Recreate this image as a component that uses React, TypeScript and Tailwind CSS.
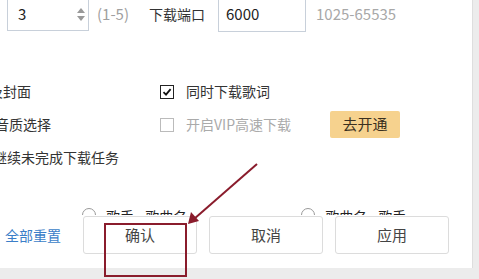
const font = { fontFamily: '"Noto Sans CJK SC", "Noto Sans", sans-serif' };

const CheckBox = ({ checked }: { checked?: boolean }) => (
  <span
    className={`flex h-[14px] w-[14px] items-center justify-center border ${
      checked ? "border-[#222] border-[1.5px]" : "border-[#bbb]"
    }`}
  >
    {checked && (
      <svg width="10" height="10" viewBox="0 0 10 10">
        <path d="M1.5 5.2 L4 7.6 L8.6 2.2" fill="none" stroke="#111" strokeWidth="1.8" />
      </svg>
    )}
  </span>
);

const Btn = ({ label }: { label: string }) => (
  <button className="flex h-[38px] w-[114px] items-center justify-center rounded-[3px] border border-[#dcdcdc] bg-white text-[15px] text-[#444]">
    {label}
  </button>
);

export default function App() {
  return (
    <div className="relative h-[279px] w-[479px] overflow-hidden bg-[#ececec]" style={font}>
      <div className="flex h-[268px] w-[473px] flex-col overflow-hidden border-r border-[#dedede] bg-white">
        {/* top row */}
        <div className="mt-[-3px] flex items-center">
          <div className="ml-[7px] flex h-[32px] w-[82px] items-center justify-between border border-[#c8d0da] pl-[10px] pr-[3px]">
            <span className="text-[15px] text-[#222]">3</span>
            <span className="flex flex-col items-center gap-[3px]">
              <svg width="8" height="5" viewBox="0 0 8 5">
                <path d="M0 5 L4 0 L8 5 Z" fill="#999" />
              </svg>
              <svg width="8" height="5" viewBox="0 0 8 5">
                <path d="M0 0 L4 5 L8 0 Z" fill="#999" />
              </svg>
            </span>
          </div>
          <span className="ml-[8px] text-[15px] text-[#a0a0a0]">(1-5)</span>
          <span className="ml-[20px] text-[14px] text-[#333]">下载端口</span>
          <div className="ml-[13px] flex h-[35px] w-[88px] items-center border border-[#c8d0da] pl-[7px] text-[15px] text-[#222]">
            6000
          </div>
          <span className="ml-[10px] text-[15px] text-[#a8a8a8]">1025-65535</span>
        </div>

        {/* option rows */}
        <div className="mt-[43px] flex h-[33px] items-center">
          <span className="ml-[-11px] w-[171px] text-[14px] text-[#333]">及封面</span>
          <CheckBox checked />
          <span className="ml-[12px] text-[14px] text-[#333]">同时下载歌词</span>
        </div>
        <div className="flex h-[33px] items-center">
          <span className="ml-[-5px] w-[165px] text-[14px] text-[#333]">音质选择</span>
          <CheckBox />
          <span className="ml-[12px] text-[14px] text-[#aaa]">开启VIP高速下载</span>
          <span className="ml-[39px] flex h-[27px] w-[70px] items-center justify-center rounded-[2px] bg-[#f6d28e] text-[15px] text-[#3a3020]">
            去开通
          </span>
        </div>
        <div className="flex h-[32px] items-center">
          <span className="ml-[-7px] text-[14px] text-[#333]">继续未完成下载任务</span>
        </div>

        {/* radio row, mostly hidden behind footer */}
        <div className="mt-[34px] h-[8px] overflow-hidden">
          <div className="flex items-start pt-[1px] text-[14px] leading-[18px] text-[#222]">
            <span className="ml-[82px] h-[14px] w-[14px] rounded-full border border-[#999]" />
            <span className="ml-[10px] -mt-[1px]">歌手 - 歌曲名</span>
            <span className="ml-[114px] h-[14px] w-[14px] rounded-full border border-[#999]" />
            <span className="ml-[10px] -mt-[1px]">歌曲名 - 歌手</span>
          </div>
        </div>

        {/* footer */}
        <div className="mt-[1px] flex items-center bg-white">
          <span className="ml-[5px] w-[78px] text-[14px] text-[#3b7ec8]">全部重置</span>
          <div className="flex gap-[12px]">
            <Btn label="确认" />
            <Btn label="取消" />
            <Btn label="应用" />
          </div>
        </div>
      </div>

      {/* red annotation */}
      <svg className="pointer-events-none absolute left-0 top-0" width="479" height="279">
        <rect x="105" y="224" width="81" height="52" fill="none" stroke="#8a1c2c" strokeWidth="2" />
        <line x1="257" y1="164" x2="194" y2="219" stroke="#8a1c2c" strokeWidth="2" />
        <path d="M188 224 L191 212 L199 221 Z" fill="#8a1c2c" />
      </svg>
    </div>
  );
}
